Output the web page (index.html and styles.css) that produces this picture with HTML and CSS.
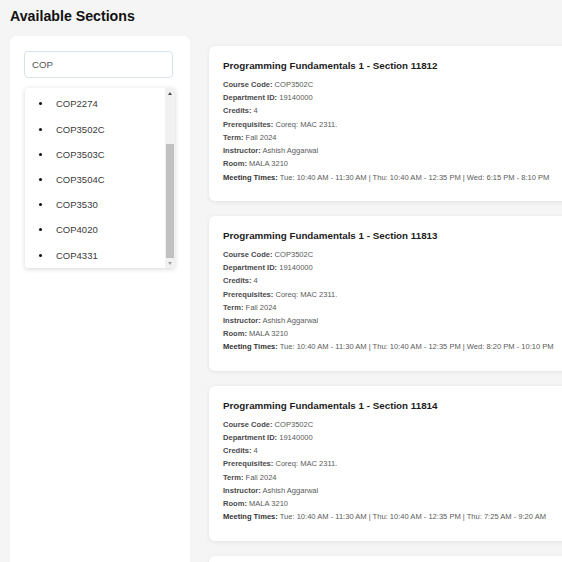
FILE: index.html
```html
<!DOCTYPE html>
<html lang="en">
<head>
<meta charset="utf-8">
<title>Available Sections</title>
<link rel="stylesheet" href="styles.css">
</head>
<body>
<div class="page">
  <h1 class="page-title">Available Sections</h1>
  <div class="layout">
    <aside class="search-panel">
      <input class="search-input" type="text" value="COP">
      <div class="suggest">
        <ul class="suggest-list">
          <li class="suggest-item"><span class="dot"></span><span>COP2274</span></li>
          <li class="suggest-item"><span class="dot"></span><span>COP3502C</span></li>
          <li class="suggest-item"><span class="dot"></span><span>COP3503C</span></li>
          <li class="suggest-item"><span class="dot"></span><span>COP3504C</span></li>
          <li class="suggest-item"><span class="dot"></span><span>COP3530</span></li>
          <li class="suggest-item"><span class="dot"></span><span>COP4020</span></li>
          <li class="suggest-item"><span class="dot"></span><span>COP4331</span></li>
        </ul>
        <div class="scrollbar">
          <div class="sb-btn"><span class="arrow-up"></span></div>
          <div class="sb-track"><div class="sb-thumb"></div></div>
          <div class="sb-btn"><span class="arrow-down"></span></div>
        </div>
      </div>
    </aside>
    <main class="sections">
      <article class="card">
        <h2 class="card-title">Programming Fundamentals 1 - Section 11812</h2>
        <p class="field"><b>Course Code:</b> COP3502C</p>
        <p class="field"><b>Department ID:</b> 19140000</p>
        <p class="field"><b>Credits:</b> 4</p>
        <p class="field"><b>Prerequisites:</b> Coreq: MAC 2311.</p>
        <p class="field"><b>Term:</b> Fall 2024</p>
        <p class="field"><b>Instructor:</b> Ashish Aggarwal</p>
        <p class="field"><b>Room:</b> MALA 3210</p>
        <p class="field"><b class="strong">Meeting Times:</b> Tue: 10:40 AM - 11:30 AM | Thu: 10:40 AM - 12:35 PM | Wed: 6:15 PM - 8:10 PM</p>
      </article>
      <article class="card">
        <h2 class="card-title">Programming Fundamentals 1 - Section 11813</h2>
        <p class="field"><b>Course Code:</b> COP3502C</p>
        <p class="field"><b>Department ID:</b> 19140000</p>
        <p class="field"><b>Credits:</b> 4</p>
        <p class="field"><b>Prerequisites:</b> Coreq: MAC 2311.</p>
        <p class="field"><b>Term:</b> Fall 2024</p>
        <p class="field"><b>Instructor:</b> Ashish Aggarwal</p>
        <p class="field"><b>Room:</b> MALA 3210</p>
        <p class="field"><b class="strong">Meeting Times:</b> Tue: 10:40 AM - 11:30 AM | Thu: 10:40 AM - 12:35 PM | Wed: 8:20 PM - 10:10 PM</p>
      </article>
      <article class="card">
        <h2 class="card-title">Programming Fundamentals 1 - Section 11814</h2>
        <p class="field"><b>Course Code:</b> COP3502C</p>
        <p class="field"><b>Department ID:</b> 19140000</p>
        <p class="field"><b>Credits:</b> 4</p>
        <p class="field"><b>Prerequisites:</b> Coreq: MAC 2311.</p>
        <p class="field"><b>Term:</b> Fall 2024</p>
        <p class="field"><b>Instructor:</b> Ashish Aggarwal</p>
        <p class="field"><b>Room:</b> MALA 3210</p>
        <p class="field"><b class="strong">Meeting Times:</b> Tue: 10:40 AM - 11:30 AM | Thu: 10:40 AM - 12:35 PM | Thu: 7:25 AM - 9:20 AM</p>
      </article>
      <article class="card card-empty"></article>
    </main>
  </div>
</div>
</body>
</html>
```
FILE: styles.css
```css
html, body {
  margin: 0;
  padding: 0;
  overflow: hidden;
  background: #f5f5f5;
}
body {
  font-family: "Liberation Sans", Arial, sans-serif;
  color: #222;
}
.page {
  padding: 8px 0 0 10px;
}
.page-title {
  margin: 0 0 12px 0;
  font-size: 14.2px;
  line-height: 16px;
  font-weight: bold;
  color: #111;
}
.layout {
  display: flex;
  align-items: flex-start;
  gap: 19px;
}
.search-panel {
  flex: 0 0 auto;
  width: 152px;
  min-height: 560px;
  padding: 15px 14px;
  background: #fff;
  border-radius: 6px;
  box-shadow: 0 0 2px rgba(0, 0, 0, 0.03);
  display: flex;
  flex-direction: column;
  align-items: flex-start;
}
.search-input {
  box-sizing: border-box;
  width: 149px;
  height: 27px;
  margin: 0;
  padding: 0 7px;
  border: 1px solid #d9e1ec;
  border-radius: 4px;
  font-family: "Liberation Sans", Arial, sans-serif;
  font-size: 9.7px;
  color: #555;
  background: #fff;
  outline: none;
}
.suggest {
  margin: 10px 0 0 1px;
  width: 150px;
  height: 180px;
  display: flex;
  background: #fff;
  border-radius: 3px;
  box-shadow: 0 1px 5px rgba(0, 0, 0, 0.16);
  overflow: hidden;
}
.suggest-list {
  flex: 1;
  list-style: none;
  margin: 0;
  padding: 3.4px 0 0 0;
}
.suggest-item {
  height: 25.2px;
  display: flex;
  align-items: center;
  padding-left: 14px;
  font-size: 9.5px;
  color: #3a3a3a;
}
.dot {
  width: 3px;
  height: 3px;
  border-radius: 50%;
  background: #111;
  margin-right: 14px;
}
.scrollbar {
  flex: 0 0 10px;
  display: flex;
  flex-direction: column;
  background: #f1f1f1;
}
.sb-btn {
  height: 10px;
  display: flex;
  align-items: center;
  justify-content: center;
}
.arrow-up {
  width: 0;
  height: 0;
  border-left: 2.5px solid transparent;
  border-right: 2.5px solid transparent;
  border-bottom: 3px solid #505050;
}
.arrow-down {
  width: 0;
  height: 0;
  border-left: 2.5px solid transparent;
  border-right: 2.5px solid transparent;
  border-top: 3px solid #a3a3a3;
}
.sb-track {
  flex: 1;
  display: flex;
  flex-direction: column;
  justify-content: flex-end;
}
.sb-thumb {
  height: 114px;
  margin: 0 1px 0 0.5px;
  background: #c1c1c1;
}
.sections {
  flex: 0 0 auto;
  width: 400px;
  margin-top: 10px;
  display: flex;
  flex-direction: column;
  gap: 15px;
}
.card {
  background: #fff;
  border-radius: 6px;
  box-shadow: 0 1px 4px rgba(0, 0, 0, 0.08);
  padding: 14px 14px 17px 14px;
}
.card-empty {
  height: 120px;
}
.card-title {
  margin: 0 0 6.7px 0;
  font-size: 9.8px;
  line-height: 11.3px;
  font-weight: bold;
  color: #1c1c1c;
  white-space: nowrap;
}
.field {
  margin: 0;
  font-size: 7.55px;
  line-height: 13.24px;
  color: #5a5a5a;
  white-space: nowrap;
}
.field b {
  font-weight: bold;
  color: #4a4a4a;
}
.field b.strong {
  color: #333;
}
```
